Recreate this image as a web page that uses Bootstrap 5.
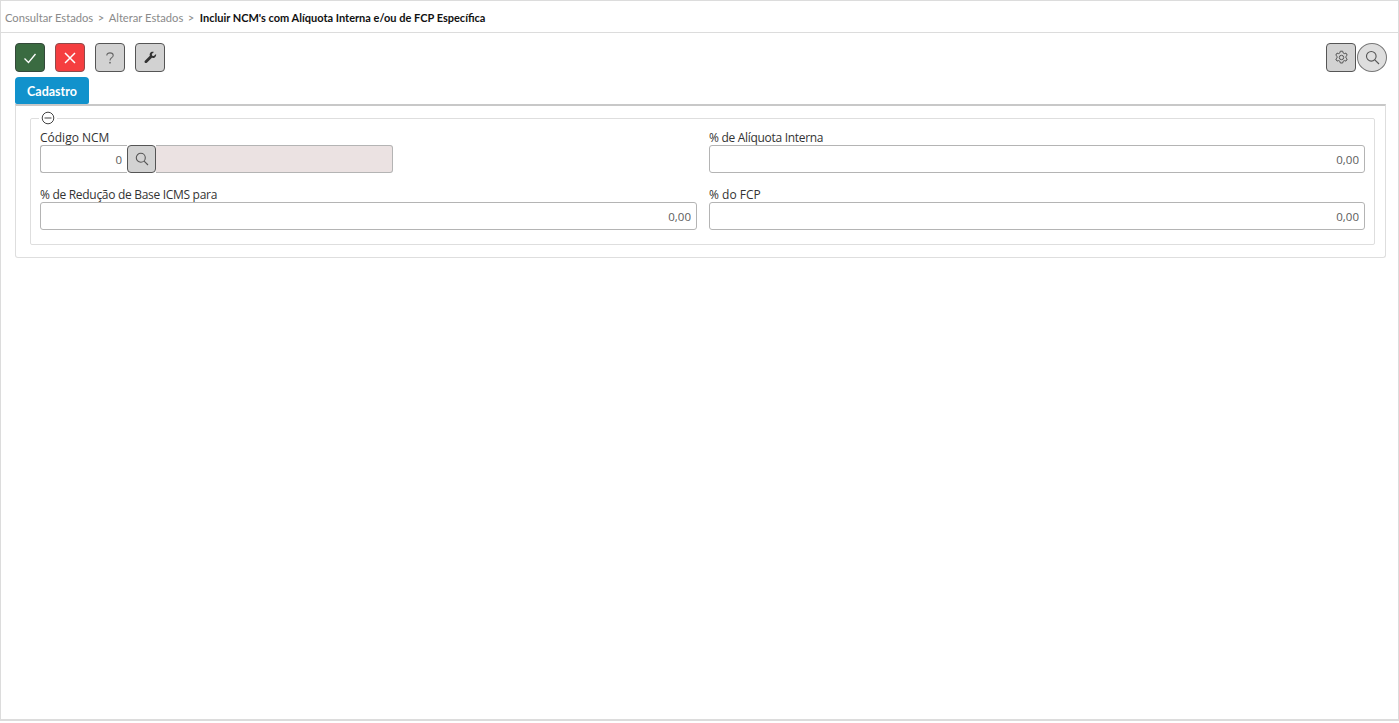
<!DOCTYPE html>
<html lang="pt-BR">
<head>
<meta charset="utf-8">
<title>Incluir NCM's</title>
<link href="https://cdn.jsdelivr.net/npm/bootstrap@5.3.0/dist/css/bootstrap.min.css" rel="stylesheet">
<style>
html,body{height:100%;background:#fff;overflow:hidden}
body{font-family:"Open Sans","Noto Sans",sans-serif;font-size:12px;color:#333}
.app-frame{height:721px;border:1px solid #dcdcdc;border-bottom:2px solid #dcdcdc;background:#fff;width:1399px}
.crumbs{height:32px;border-bottom:1px solid #dcdcdc;font-family:Lato,"Liberation Sans",sans-serif;font-size:11.2px;padding:4px 0 0 4px;color:#8a8a8a}
.crumbs .sep{margin:0 4.5px}
.crumbs b{color:#111;font-weight:700;font-size:11px;margin-left:1px}
.toolbar{padding:10px 11px 0 14px;height:44px}
.tbtn{width:30px;height:29px;border-radius:4px;border:1px solid #555;background:#d2d2d2;padding:0;display:flex;align-items:center;justify-content:center;color:#555}
.tbtn.ok{background:#3a6b41;border-color:#34483a}
.tbtn.no{background:#f53e40;border-color:#8f4a4a}
.tbtn.round{border-radius:50%;background:#dedede;border-color:#777;margin-left:1px;width:30px}
.gap10{gap:10px}
.tabbar{padding-left:14px;height:27px}
.tab-active{width:74px;height:27px;padding-top:4px;background:#1192cc;color:#fff;font-family:Lato,"Liberation Sans",sans-serif;font-weight:700;font-size:12.5px;border-radius:4px 4px 2px 2px;display:flex;align-items:center;justify-content:center}
.panel{margin-left:14px;width:1371px;height:154px;border:1px solid #dedede;border-top:2px solid #c8c8c8;border-radius:0 0 3px 3px;padding:5px 10px 0 14px}
.group{height:134px;border:1px solid #dedede;border-radius:2px;margin:0;padding:0 9px;width:1345px;min-width:0}
.group legend{float:none;width:auto;margin:0 0 0 -1px;padding:0 2px;font-size:0;line-height:0;height:14px}
.form-cols{display:grid;grid-template-columns:657px 656px;column-gap:12px;row-gap:0;margin-top:4px}
.fld label{display:block;font-size:12px;line-height:18px;height:16px;color:#333;margin:0}
.fld label.tight{letter-spacing:-.3px}
.fld{height:57px}
.inp{height:28px;border:1px solid #b4b4b4;border-radius:3px;background:#fff;font-size:11.5px;color:#5c5c5c;text-align:right;padding:0 5px;width:100%;font-family:inherit}
.code{width:87px;border-radius:3px 0 0 3px;flex:none;border-right:0}
.sbtn{width:29px;height:28px;flex:none;background:#d2d2d2;border:1px solid #555;border-radius:4px;padding:0;display:flex;align-items:center;justify-content:center}
.desc{width:237px;flex:none;background:#ebe2e2;border-left:0;border-radius:0 3px 3px 0}
</style>
</head>
<body>
<div class="app-frame">
  <div class="crumbs d-flex align-items-center">
    <span>Consultar Estados</span><span class="sep">&gt;</span><span>Alterar Estados</span><span class="sep">&gt;</span><b>Incluir NCM's com Alíquota Interna e/ou de FCP Específica</b>
  </div>
  <div class="toolbar d-flex justify-content-between">
    <div class="d-flex gap10">
      <button class="tbtn ok" aria-label="Confirmar"><svg width="14" height="14" viewBox="0 0 14 14"><path d="M1.500 7.500 5.500 11.500 12.500 3" fill="none" stroke="#fff" stroke-width="1.300"/></svg></button>
      <button class="tbtn no" aria-label="Cancelar"><svg width="14" height="14" viewBox="0 0 14 14"><path d="M2 2 12 12M12 2 2 12" fill="none" stroke="#fff" stroke-width="1.500"/></svg></button>
      <button class="tbtn" aria-label="Ajuda"><svg width="10" height="14" viewBox="0 0 14 18"><path d="M2.500 5.500C2.500 3 4.500 1.800 7 1.800s4.500 1.400 4.500 3.600c0 3.200-4.500 3.200-4.500 7" fill="none" stroke="#666" stroke-width="1.500"/><circle cx="7" cy="15.600" r="1.200" fill="#666"/></svg></button>
      <button class="tbtn" aria-label="Ferramentas"><svg width="13" height="13" viewBox="0 0 14 14"><path d="M13 3.200 10.600 5.400 8.800 5 8.400 3.300 10.700 1C9 .4 7.400.9 6.600 2.100 6 3 6 4.200 6.300 5.100L1 10.500c-.6.700-.6 1.500 0 2.100s1.500.6 2.100 0L8.500 7.400c1 .3 2.200.2 3.100-.5 1.100-.8 1.700-2.300 1.400-3.700Z" fill="#333"/></svg></button>
    </div>
    <div class="d-flex">
      <button class="tbtn" aria-label="Configurar"><svg width="15" height="15" viewBox="0 0 15 15" fill="none" stroke="#555" stroke-width="1"><path d="M6.300 1.200h2.400l.4 1.700 1.200.7 1.700-.5 1.200 2.100-1.300 1.200v1.400l1.300 1.200-1.200 2.100-1.700-.5-1.200.7-.4 1.700H6.300l-.4-1.700-1.200-.7-1.700.5-1.200-2.100 1.300-1.200V6.400L1.800 5.200 3 3.100l1.700.5 1.200-.7Z"/><circle cx="7.500" cy="7.500" r="2.200"/></svg></button>
      <button class="tbtn round" aria-label="Pesquisar"><svg width="15" height="15" viewBox="0 0 15 15" fill="none" stroke="#555" stroke-width="1.100"><circle cx="6.300" cy="6.300" r="4.800"/><path d="M9.800 9.800 14 14"/></svg></button>
    </div>
  </div>
  <div class="tabbar"><div class="tab-active">Cadastro</div></div>
  <div class="panel">
    <fieldset class="group">
      <legend><svg width="14" height="14" viewBox="0 0 14 14" fill="none" stroke="#444" stroke-width="1"><circle cx="7" cy="7" r="5.800"/><path d="M3.500 7h7"/></svg></legend>
      <div class="form-cols">
        <div class="fld">
          <label>Código NCM</label>
          <div class="d-flex">
            <input class="inp code" value="0" aria-label="Código NCM">
            <button class="sbtn" aria-label="Buscar"><svg width="14" height="14" viewBox="0 0 14 14" fill="none" stroke="#555" stroke-width="1.100"><circle cx="5.800" cy="5.800" r="4.500"/><path d="M9.100 9.100 13 13"/></svg></button>
            <input class="inp desc" disabled aria-label="Descrição">
          </div>
        </div>
        <div class="fld">
          <label class="tight">% de Alíquota Interna</label>
          <input class="inp" value="0,00" aria-label="% de Alíquota Interna">
        </div>
        <div class="fld">
          <label class="tight">% de Redução de Base ICMS para</label>
          <input class="inp" value="0,00" aria-label="% de Redução de Base ICMS para">
        </div>
        <div class="fld">
          <label>% do FCP</label>
          <input class="inp" value="0,00" aria-label="% do FCP">
        </div>
      </div>
    </fieldset>
  </div>
</div>
<script src="https://cdn.jsdelivr.net/npm/bootstrap@5.3.0/dist/js/bootstrap.bundle.min.js"></script>
</body>
</html>
